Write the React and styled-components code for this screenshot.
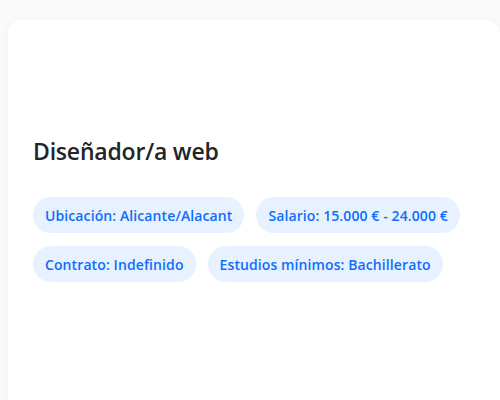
import React from "react";
import styled, { createGlobalStyle } from "styled-components";

const Global = createGlobalStyle`
  html, body {
    margin: 0;
    background: #fafafa;
    font-family: "Open Sans", "Noto Sans", sans-serif;
  }
`;

const Page = styled.div`
  padding: 20px 0 0 8px;
  height: 380px;
  overflow: hidden;
`;

const Card = styled.div`
  background: #fff;
  border-radius: 14px;
  box-shadow: 0 0 12px rgba(0, 0, 0, 0.03);
  padding: 117px 24px 40px 25px;
  min-height: 400px;
`;

const Title = styled.h2`
  margin: 0 0 32px;
  font-size: 23px;
  line-height: 28px;
  font-weight: 600;
  color: #212529;
  letter-spacing: -0.2px;
`;

const Tags = styled.div`
  display: flex;
  flex-wrap: wrap;
  gap: 13px 12px;
`;

const Tag = styled.span`
  display: inline-flex;
  align-items: center;
  height: 36px;
  padding: 0 12px;
  border-radius: 18px;
  background: #e7f1ff;
  color: #0d6efd;
  font-size: 14px;
  font-weight: 600;
  letter-spacing: 0.1px;
  white-space: nowrap;
`;

const tags = [
  "Ubicación: Alicante/Alacant",
  "Salario: 15.000 € - 24.000 €",
  "Contrato: Indefinido",
  "Estudios mínimos: Bachillerato",
];

export default function App() {
  return (
    <>
      <Global />
      <Page>
        <Card>
          <Title>Diseñador/a web</Title>
          <Tags>
            {tags.map((t) => (
              <Tag key={t}>{t}</Tag>
            ))}
          </Tags>
        </Card>
      </Page>
    </>
  );
}
